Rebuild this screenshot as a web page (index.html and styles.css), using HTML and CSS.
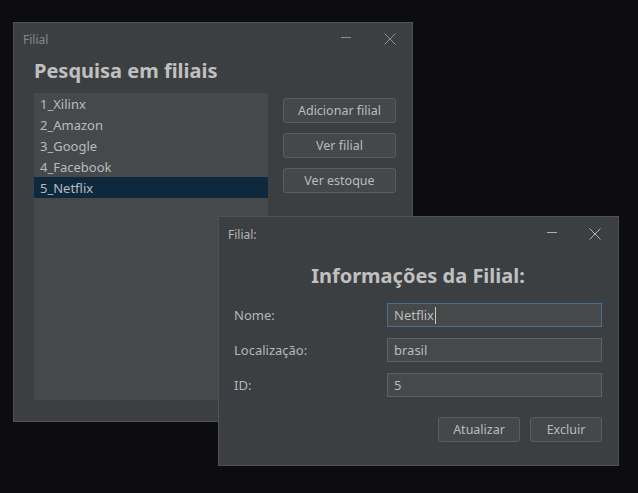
FILE: index.html
```html
<!DOCTYPE html>
<html lang="pt">
<head>
<meta charset="utf-8">
<title>Filial</title>
<link rel="stylesheet" href="styles.css">
</head>
<body>
<div class="desktop">
  <div class="window win-list inactive">
    <div class="titlebar">
      <span class="title">Filial</span>
      <div class="controls">
        <svg class="ic-min" width="12" height="12" viewBox="0 0 12 12"><line x1="1" y1="6.5" x2="11" y2="6.5" stroke="currentColor" stroke-width="1"/></svg>
        <svg class="ic-close" width="12" height="12" viewBox="0 0 12 12"><path d="M0.5 0.5 L11.5 11.5 M11.5 0.5 L0.5 11.5" stroke="currentColor" stroke-width="1" fill="none"/></svg>
      </div>
    </div>
    <h1 class="heading">Pesquisa em filiais</h1>
    <div class="list-area">
      <ul class="list">
        <li>1_Xilinx</li>
        <li>2_Amazon</li>
        <li>3_Google</li>
        <li>4_Facebook</li>
        <li class="selected">5_Netflix</li>
      </ul>
      <div class="side-buttons">
        <button class="btn wide">Adicionar filial</button>
        <button class="btn wide">Ver filial</button>
        <button class="btn wide">Ver estoque</button>
      </div>
    </div>
  </div>

  <div class="window win-info">
    <div class="titlebar">
      <span class="title">Filial:</span>
      <div class="controls">
        <svg class="ic-min" width="12" height="12" viewBox="0 0 12 12"><line x1="1" y1="6.5" x2="11" y2="6.5" stroke="currentColor" stroke-width="1"/></svg>
        <svg class="ic-close" width="12" height="12" viewBox="0 0 12 12"><path d="M0.5 0.5 L11.5 11.5 M11.5 0.5 L0.5 11.5" stroke="currentColor" stroke-width="1" fill="none"/></svg>
      </div>
    </div>
    <h2 class="heading center">Informações da Filial:</h2>
    <div class="form">
      <div class="row">
        <span class="label">Nome:</span>
        <div class="field focused">Netflix<span class="caret"></span></div>
      </div>
      <div class="row">
        <span class="label">Localização:</span>
        <div class="field">brasil</div>
      </div>
      <div class="row">
        <span class="label">ID:</span>
        <div class="field">5</div>
      </div>
    </div>
    <div class="actions">
      <button class="btn act-update">Atualizar</button>
      <button class="btn act-delete">Excluir</button>
    </div>
  </div>
</div>
</body>
</html>
```

FILE: styles.css
```css
html, body {
  margin: 0;
  padding: 0;
  background: #0c0c11;
}
body {
  width: 638px;
  height: 493px;
  overflow: hidden;
  font-family: "Noto Sans", "DejaVu Sans", sans-serif;
  color: #bbbbbb;
}
.desktop {
  position: relative;
  width: 638px;
  height: 493px;
}
.window {
  position: absolute;
  box-sizing: border-box;
  background: #3c3f41;
  border: 1px solid #505356;
  display: flex;
  flex-direction: column;
}
.win-list {
  left: 13px;
  top: 22px;
  width: 400px;
  height: 400px;
  padding: 0 16px 21px 20px;
}
.win-info {
  left: 218px;
  top: 216px;
  width: 401px;
  height: 250px;
  padding: 0 16px 0 15px;
}
.titlebar {
  height: 33px;
  display: flex;
  align-items: center;
  justify-content: space-between;
  margin-left: -11px;
}
.win-info .titlebar {
  margin-left: -6px;
  height: 33px;
}
.title {
  font-size: 12px;
  color: #b4b6b8;
}
.win-info .title {
  position: relative;
  top: 1px;
}
.inactive .title {
  color: #85888a;
}
.controls {
  display: flex;
  align-items: center;
  gap: 32px;
  color: #b0b2b4;
}
.win-info .controls {
  gap: 31px;
  margin-right: 1px;
}
.inactive .controls {
  color: #8c8f91;
}
.win-list .controls {
  position: relative;
  top: -1px;
}
.ic-min { position: relative; top: -2px; }
.heading {
  margin: 2px 0 0 0;
  font-size: 20px;
  line-height: 26px;
  font-weight: bold;
  color: #c0c0c0;
}
.heading.center {
  text-align: center;
  margin: 13px 0 0 0;
}
.list-area {
  flex: 1;
  display: flex;
  margin-top: 9px;
}
.list {
  list-style: none;
  margin: 0;
  padding: 0;
  width: 235px;
  background: #46494b;
  font-size: 13px;
}
.list li {
  height: 21px;
  line-height: 22px;
  padding-left: 6px;
  color: #bbbbbb;
}
.list li.selected {
  background: #0e293e;
}
.side-buttons {
  margin-left: 15px;
  padding-top: 5px;
  display: flex;
  flex-direction: column;
  gap: 10px;
}
.btn {
  box-sizing: border-box;
  height: 25px;
  background: #45484a;
  border: 1px solid #5a5d60;
  border-radius: 3px;
  color: #bbbbbb;
  font-family: "Noto Sans", "DejaVu Sans", sans-serif;
  font-size: 12.5px;
  padding: 0;
}
.btn.wide {
  width: 113px;
}
.form {
  margin-top: 14px;
  display: flex;
  flex-direction: column;
  gap: 11px;
}
.row {
  display: flex;
  align-items: center;
  justify-content: space-between;
}
.label {
  font-size: 13px;
  color: #b4b6b8;
}
.field {
  box-sizing: border-box;
  width: 215px;
  height: 24px;
  background: #45494a;
  border: 1px solid #5e6163;
  padding-left: 6px;
  font-size: 13px;
  color: #bbbbbb;
  display: flex;
  align-items: center;
}
.field.focused {
  border-color: #4a6e98;
}
.caret {
  display: inline-block;
  width: 1px;
  height: 17px;
  background: #c8c8c8;
  margin-left: 1px;
}
.actions {
  margin-top: 20px;
  display: flex;
  justify-content: flex-end;
  gap: 10px;
}
.act-update { width: 82px; }
.act-delete { width: 72px; }
```
